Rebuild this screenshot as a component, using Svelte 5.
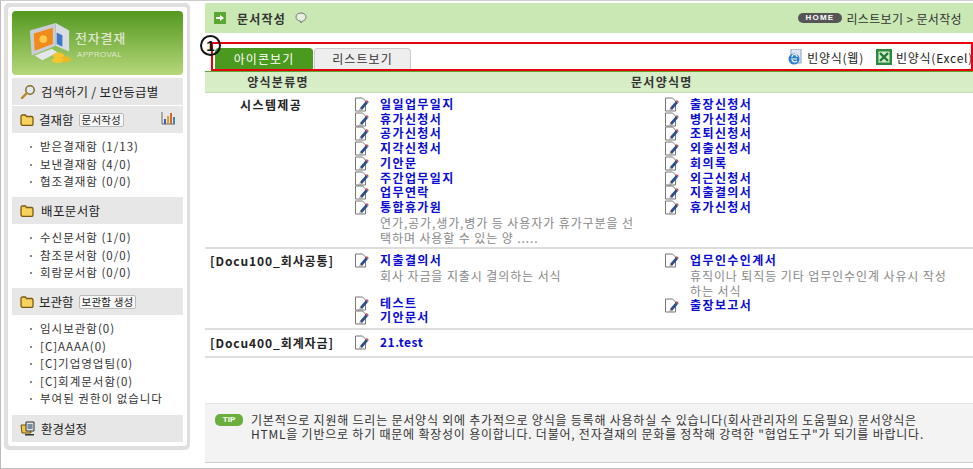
<script>
  const rows = [
    { cat: '시스템제공', pad: 4, h: 156, left: [
      { t: '일일업무일지' }, { t: '휴가신청서' }, { t: '공가신청서' }, { t: '지각신청서' }, { t: '기안문' }, { t: '주간업무일지' }, { t: '업무연락' },
      { t: '통합휴가원', d: '연가,공가,생가,병가 등 사용자가 휴가구분을 선택하며 사용할 수 있는 양 .....' } ],
      right: [ { t: '출장신청서' }, { t: '병가신청서' }, { t: '조퇴신청서' }, { t: '외출신청서' }, { t: '회의록' }, { t: '외근신청서' }, { t: '지출결의서' }, { t: '휴가신청서' } ] },
    { cat: '[Docu100_회사공통]', pad: 4, h: 81, left: [
      { t: '지출결의서', d: '회사 자금을 지출시 결의하는 서식', gap: true }, { t: '테스트' }, { t: '기안문서' } ],
      right: [ { t: '업무인수인계서', d: '휴직이나 퇴직등 기타 업무인수인계 사유시 작성하는 서식' }, { t: '출장보고서' } ] },
    { cat: '[Docu400_회계자금]', pad: 5, h: 28, left: [ { t: '21.test', latin: true } ], right: [] }
  ];
</script>

<div class="page">
  <aside class="side">
    <div class="inner">
      <div class="logo">
        <svg class="pc" width="46" height="44" viewBox="0 0 46 46">
          <path d="M30 2l14 8v22l-14-6z" fill="#d8dde4"/>
          <path d="M3 10L30 2v24L5 36z" fill="#c9ced6"/>
          <path d="M7 13l20-6v17L8 31z" fill="#f08a1c"/>
          <path d="M31 12l6 3v12l-6-3z" fill="#3d78c8"/>
          <path d="M8 36l18-7 6 4-16 8z" fill="#e3e6ea"/>
          <circle cx="17" cy="19" r="4" fill="#ffc94d"/>
          <ellipse cx="33" cy="36" rx="6" ry="3" fill="#f5c52f"/>
          <ellipse cx="40" cy="40" rx="6" ry="3" fill="#eeb820"/>
          <ellipse cx="32" cy="41" rx="6" ry="3" fill="#f5c52f"/>
        </svg>
        <div class="logotext"><b>전자결재</b><small>APPROVAL</small></div>
      </div>

      <div class="bar search">
        <svg width="16" height="16" viewBox="0 0 16 16"><circle cx="10" cy="6" r="4.2" fill="#dfeaf5" stroke="#8a6a25" stroke-width="1.5"/><path d="M6.800 9.200L2 14" stroke="#b5862a" stroke-width="2.400" stroke-linecap="round"/></svg>
        <span>검색하기 / 보안등급별</span>
      </div>

      <div class="bar">
        {@render folder()}
        <span class="l1">결재함</span><em class="btn">문서작성</em>
        <svg class="chart" width="14" height="13" viewBox="0 0 14 13"><path d="M1 0v12h13" stroke="#667" fill="none"/><path d="M3 7h2v5H3z" fill="#3b5ea8"/><path d="M6 4h2v8H6z" fill="#d9a22c"/><path d="M9 1h2v11H9z" fill="#d9662c"/><path d="M12 5h2v7h-2z" fill="#3b8aa8"/></svg>
      </div>
      <ul>
        <li>받은결재함 (1/13)</li><li>보낸결재함 (4/0)</li><li>협조결재함 (0/0)</li>
      </ul>

      <div class="bar">{@render folder()}<span class="l2">배포문서함</span></div>
      <ul>
        <li>수신문서함 (1/0)</li><li>참조문서함 (0/0)</li><li>회람문서함 (0/0)</li>
      </ul>

      <div class="bar">{@render folder()}<span class="l1">보관함</span><em class="btn">보관함 생성</em></div>
      <ul>
        <li>임시보관함(0)</li><li>[C]AAAA(0)</li><li>[C]기업영업팀(0)</li><li>[C]회계문서함(0)</li><li>부여된 권한이 없습니다</li>
      </ul>

      <div class="bar last">
        <svg width="16" height="15" viewBox="0 0 16 15"><path d="M1 4h9l1 8H2z" fill="#f0c848" stroke="#6b5210"/><path d="M6 1h8v9H6z" fill="#dfe3ea" stroke="#333"/><path d="M7.500 3h5v5h-5z" fill="#7c8ba5"/><path d="M5 13h9v1.500H5z" fill="#333"/></svg>
        <span>환경설정</span>
      </div>
    </div>
  </aside>

  <main class="main">
    <header class="title">
      <span class="arrow">
        <svg width="12" height="12" viewBox="0 0 12 12"><path d="M0 0h12v12H0z" fill="#5aa832"/><path d="M2 5h4V3l4 3-4 3V7H2z" fill="#fff"/></svg>
      </span>
      <strong>문서작성</strong>
      <svg class="bubble" width="12" height="12" viewBox="0 0 12 12"><path d="M6 1c3 0 5 1.700 5 4s-2 4-3.500 4L6 11 5.500 9C3 9 1 7.300 1 5s2-4 5-4z" fill="#e6efe0" stroke="#777"/></svg>
      <span class="crumbs"><i>HOME</i>리스트보기 &gt; 문서작성</span>
    </header>

    <div class="tabs">
      <span class="tab on">아이콘보기</span>
      <span class="tab">리스트보기</span>
      <span class="tools">
        <svg width="16" height="16" viewBox="0 0 16 16"><path d="M4 0h10v14H4z" fill="#dfe6f2" stroke="#8fa0bd"/><circle cx="7" cy="10" r="5.500" fill="#2f7fd0"/><path d="M4 10h6M5 8a2.500 2.500 0 0 1 5 0M10 12a3 3 0 0 1-5-1" stroke="#fff" stroke-width="1.200" fill="none"/></svg>
        <span>빈양식(웹)</span>
        <svg class="xl" width="16" height="16" viewBox="0 0 16 16"><path d="M0 0h16v16H0z" fill="#2d8a3e"/><path d="M2.500 2.500h11v11h-11z" fill="#d5ecd0"/><path d="M4 4l8 8M12 4l-8 8" stroke="#1f7a30" stroke-width="2.400"/></svg>
        <span>빈양식(Excel)</span>
      </span>
    </div>
    <div class="redbox"></div>
    <div class="num">1</div>

    <div class="thead"><span class="c0">양식분류명</span><span class="c1">문서양식명</span></div>

    {#each rows as r}
      <section class="row" style="height:{r.h}px;padding-top:{r.pad}px">
        <div class="cat" class:sys={r.h === 156}>{r.cat}</div>
        {#each [r.left, r.right] as col}
          <div class="col">
            {#each col as it}
              <div class="item" class:gapped={it.gap}>
                <svg class="doc" width="15" height="15" viewBox="0 0 15 15"><path d="M1.500 1h7l3 3v10h-10z" fill="#fff" stroke="#777"/><path d="M6 11l6-7 2 2-6 7-2.500.5z" fill="#2c4f8c"/><path d="M12 4l2 2 .8-1-2-2z" fill="#c8443a"/><path d="M6 11l2 2-2.500.5z" fill="#e8c89a"/></svg>
                <div class="txt"><a href="#top" class:latin={it.latin}>{it.t}</a>{#if it.d}<p>{it.d}</p>{/if}</div>
              </div>
            {/each}
          </div>
        {/each}
      </section>
    {/each}

    <footer class="tip">
      <b>TIP</b>
      <p>기본적으로 지원해 드리는 문서양식 외에 추가적으로 양식을 등록해 사용하실 수 있습니다(회사관리자의 도움필요) 문서양식은 HTML을 기반으로 하기 때문에 확장성이 용이합니다. 더불어, 전자결재의 문화를 정착해 강력한 "협업도구"가 되기를 바랍니다.</p>
    </footer>
  </main>
</div>

{#snippet folder()}
  <svg width="14" height="12" viewBox="0 0 14 12"><path d="M1 2.500C1 1.500 1.500 1 2.500 1h3l1 1.500h5c1 0 1.500.5 1.500 1.500v6c0 1-.5 1.500-1.500 1.500h-9C1.500 11 1 10.500 1 9.500z" fill="#f7d25c" stroke="#7a5a10" stroke-width="1.300"/></svg>
{/snippet}

<style>
  :global(body) { margin: 0; background: #fff; }
  .page {
    width: 973px; height: 469px; box-sizing: border-box; position: relative; overflow: hidden;
    display: flex; align-items: flex-start; padding-top: 2px;
    border-top: 1px solid #ccc; border-bottom: 1px solid #bbb; border-left: 1px solid #bbb;
    font-family: "Noto Sans CJK KR", "Noto Sans", sans-serif; font-size: 12px; color: #222;
  }
  .side { width: 186px; margin-left: 3px; padding: 8px 7px 8px 8px; box-sizing: border-box; background: #dfdfdf; border-radius: 5px; flex: none; position: relative; }
  .inner { background: #fff; margin: -4px; padding: 4px; border-radius: 3px; }
  .logo { height: 64px; background: linear-gradient(#53981f, #b5d77a); border-radius: 4px; display: flex; align-items: center; padding-left: 14px; gap: 3px; }
  .logotext { color: #dfe8cf; display: flex; flex-direction: column; margin-top: 5px; }
  .logotext b { font-size: 13px; font-weight: 500; letter-spacing: .8px; line-height: 18px; }
  .logotext small { font: 8px "Liberation Sans", sans-serif; line-height: 16px; letter-spacing: .3px; margin-left: 2px; }
  .bar { height: 27px; background: #e7e7e7; display: flex; align-items: center; padding-left: 8px; gap: 5px; margin-top: 1px; font-size: 12.500px; color: #222; position: relative; white-space: nowrap; }
  .bar.search { margin-top: 3px; letter-spacing: .3px; }
  .bar .l2 { margin-left: 2px; letter-spacing: .4px; }
  .btn { font-style: normal; font-size: 10.500px; line-height: 12px; padding: 0 2px; background: #f7f7f7; border: 1px solid #bbb; border-radius: 2px; letter-spacing: .2px; }
  .chart { position: absolute; right: 8px; top: 6px; }
  .bar.last { margin-top: 2px; }
  ul { list-style: none; margin: 0; padding: 5px 0 5.500px 18px; }
  li { font-size: 11.500px; line-height: 17.500px; padding-left: 10px; position: relative; color: #333; white-space: nowrap; letter-spacing: 1px; }
  li::before { content: ""; position: absolute; left: 0; top: 8px; width: 2px; height: 2px; background: #888; }
  .main { margin-left: 15px; width: 768px; flex: none; position: relative; }
  .title { height: 30px; background: #c9e8b3; display: flex; align-items: center; padding-left: 9px; }
  .arrow { display: flex; margin-right: 11px; }
  .title strong { font-size: 12px; font-weight: 700; color: #333; letter-spacing: 1.200px; }
  .bubble { margin-left: 9px; }
  .crumbs { margin-left: auto; margin-right: 11px; display: flex; align-items: center; font-size: 12px; color: #333; letter-spacing: .35px; }
  .crumbs i { font: 700 8px "Liberation Sans", sans-serif; letter-spacing: 1.200px; color: #fff; background: #555; border-radius: 5px; padding: 0 8px; line-height: 10px; margin-right: 4px; }
  .tabs { height: 22px; margin-top: 15px; margin-left: 10px; display: flex; align-items: flex-end; gap: 1px; }
  .tab { width: 97px; height: 22px; line-height: 20px; text-align: center; background: #eee; border: 1px solid #ccc; border-bottom: 0; border-radius: 4px 4px 0 0; font-size: 12px; box-sizing: border-box; color: #333; letter-spacing: 1.100px; }
  .tab.on { background: #4a9a20; border-color: #4a9a20; color: #fff; width: 98px; }
  .tools { margin-left: auto; display: flex; align-items: center; gap: 4px; height: 22px; color: #222; letter-spacing: .75px; white-space: nowrap; margin-bottom: 2px; }
  .xl { margin-left: 8px; }
  .redbox { position: absolute; left: 6px; top: 39px; width: 762px; height: 29px; box-sizing: border-box; border: 2px solid #e8000c; }
  .num { position: absolute; left: -5px; top: 32px; width: 21px; height: 21px; box-sizing: border-box; border: 2px solid #111; border-radius: 50%; font: 700 15px/17px "Liberation Sans", sans-serif; text-align: center; color: #111; }
  .thead { height: 22px; margin-top: 1px; background: #d6edc6; border-top: 1px solid #5aa832; border-bottom: 1px solid #c5dcb6; display: flex; font-weight: 700; box-sizing: border-box; line-height: 20px; color: #333; position: relative; letter-spacing: 1.300px; }
  .thead .c0 { width: 146px; text-align: center; }
  .thead .c1 { margin-left: 280px; }
  .row { display: flex; box-sizing: border-box; border-bottom: 2px solid #ddd; }
  .cat { width: 149px; flex: none; font-weight: 700; line-height: 15px; color: #222; padding-left: 5px; box-sizing: border-box; white-space: nowrap; letter-spacing: .9px; }
  .cat.sys { padding-left: 35px; letter-spacing: 1.400px; }
  .col { width: 310px; flex: none; }
  .item { display: flex; gap: 11px; }
  .item.gapped { margin-bottom: 13px; }
  .doc { flex: none; margin-bottom: -1px; }
  .txt { width: 258px; }
  a { display: block; color: #0a0ad2; font-weight: 700; font-size: 12px; line-height: 14.700px; text-decoration: none; letter-spacing: 1.400px; }
  a.latin { letter-spacing: .5px; }
  .item p { margin: 0; color: #888; font-size: 12px; line-height: 15px; letter-spacing: .9px; word-break: break-all; }
  .tip { position: absolute; left: 0; top: 400px; width: 768px; height: 60px; box-sizing: border-box; background: #f3f3f3; border-top: 1px solid #e5e5e5; border-bottom: 1px solid #ccc; display: flex; gap: 8px; padding: 9px 0 0 10px; }
  .tip b { width: 28px; height: 12px; flex: none; margin-top: 1px; border-radius: 5px; background: #6aaf3d; color: #fff; font: 700 8px/12px "Liberation Sans", sans-serif; text-align: center; }
  .tip p { margin: 0; width: 675px; line-height: 14px; font-size: 12px; color: #333; letter-spacing: .78px; }
</style>
